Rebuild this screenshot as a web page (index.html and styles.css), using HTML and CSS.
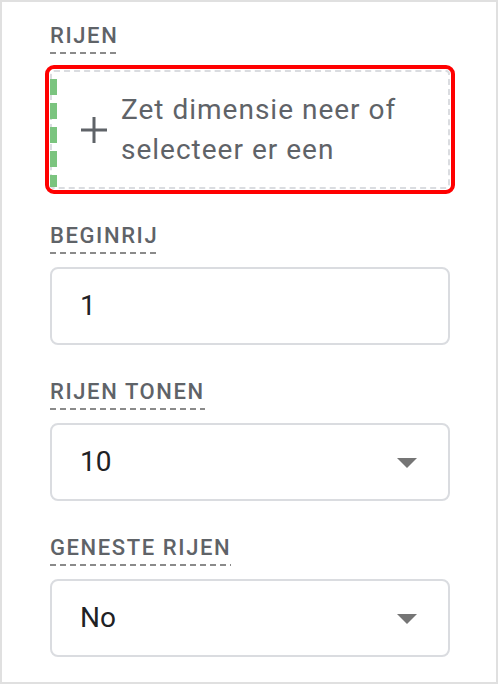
FILE: index.html
```html
<!DOCTYPE html>
<html lang="nl">
<head>
<meta charset="utf-8">
<title>Rijen</title>
<link rel="stylesheet" href="styles.css">
</head>
<body>
<div class="panel">
  <section class="field">
    <div class="label">RIJEN</div>
    <div class="dropzone">
      <svg class="plus" width="28" height="28" viewBox="0 0 28 28" aria-hidden="true">
        <path d="M14 1V27M1 14H27" stroke="#5f6368" stroke-width="3" fill="none"/>
      </svg>
      <span class="dz-text">Zet dimensie neer of selecteer er een</span>
    </div>
  </section>
  <section class="field">
    <div class="label">BEGINRIJ</div>
    <div class="box"><span class="value">1</span></div>
  </section>
  <section class="field">
    <div class="label">RIJEN TONEN</div>
    <div class="box"><span class="value">10</span><span class="arrow"></span></div>
  </section>
  <section class="field">
    <div class="label">GENESTE RIJEN</div>
    <div class="box"><span class="value">No</span><span class="arrow"></span></div>
  </section>
</div>
</body>
</html>
```
FILE: styles.css
```css
* { box-sizing: border-box; }
body { margin: 0; background: #fff; }
.panel {
  width: 498px;
  height: 684px;
  border: 2px solid #e0e0e0;
  padding: 22px 46px 0 48px;
  display: flex;
  flex-direction: column;
  font-family: Roboto, "Liberation Sans", sans-serif;
  background: #fff;
}
.field { display: flex; flex-direction: column; }
.field + .field { margin-top: 35px; }
.label {
  align-self: flex-start;
  font-size: 22px;
  font-weight: 500;
  line-height: 24px;
  letter-spacing: 1.6px;
  color: #5f6368;
  padding-bottom: 6px;
  background: repeating-linear-gradient(to right, #8a8a8a 0 6px, transparent 6px 10px) left bottom / 100% 2px no-repeat;
}
.dropzone {
  position: relative;
  margin-top: 16px;
  height: 119px;
  border: 2px dashed #dadce0;
  border-radius: 4px;
  outline: 4px solid #ff0000;
  outline-offset: 1px;
  display: flex;
  align-items: center;
  padding-left: 28px;
}
.dropzone::before {
  content: "";
  position: absolute;
  left: -2px;
  top: 7px;
  bottom: 0;
  width: 7px;
  background: repeating-linear-gradient(to bottom, #7bc47f 0 16px, transparent 16px 24px);
}
.plus { flex: none; margin-right: 13px; }
.dz-text {
  font-size: 28px;
  line-height: 40px;
  letter-spacing: 1px;
  color: #5f6368;
  padding-right: 16px;
}
.box {
  margin-top: 13px;
  height: 78px;
  border: 2px solid #dadce0;
  border-radius: 8px;
  display: flex;
  align-items: center;
  padding: 0 31px 2px 28px;
  font-size: 28px;
  color: #202124;
}
.value { flex: 1; }
.arrow {
  width: 0;
  height: 0;
  border-left: 10px solid transparent;
  border-right: 10px solid transparent;
  border-top: 10px solid #757575;
  margin-top: 3px;
}
```
